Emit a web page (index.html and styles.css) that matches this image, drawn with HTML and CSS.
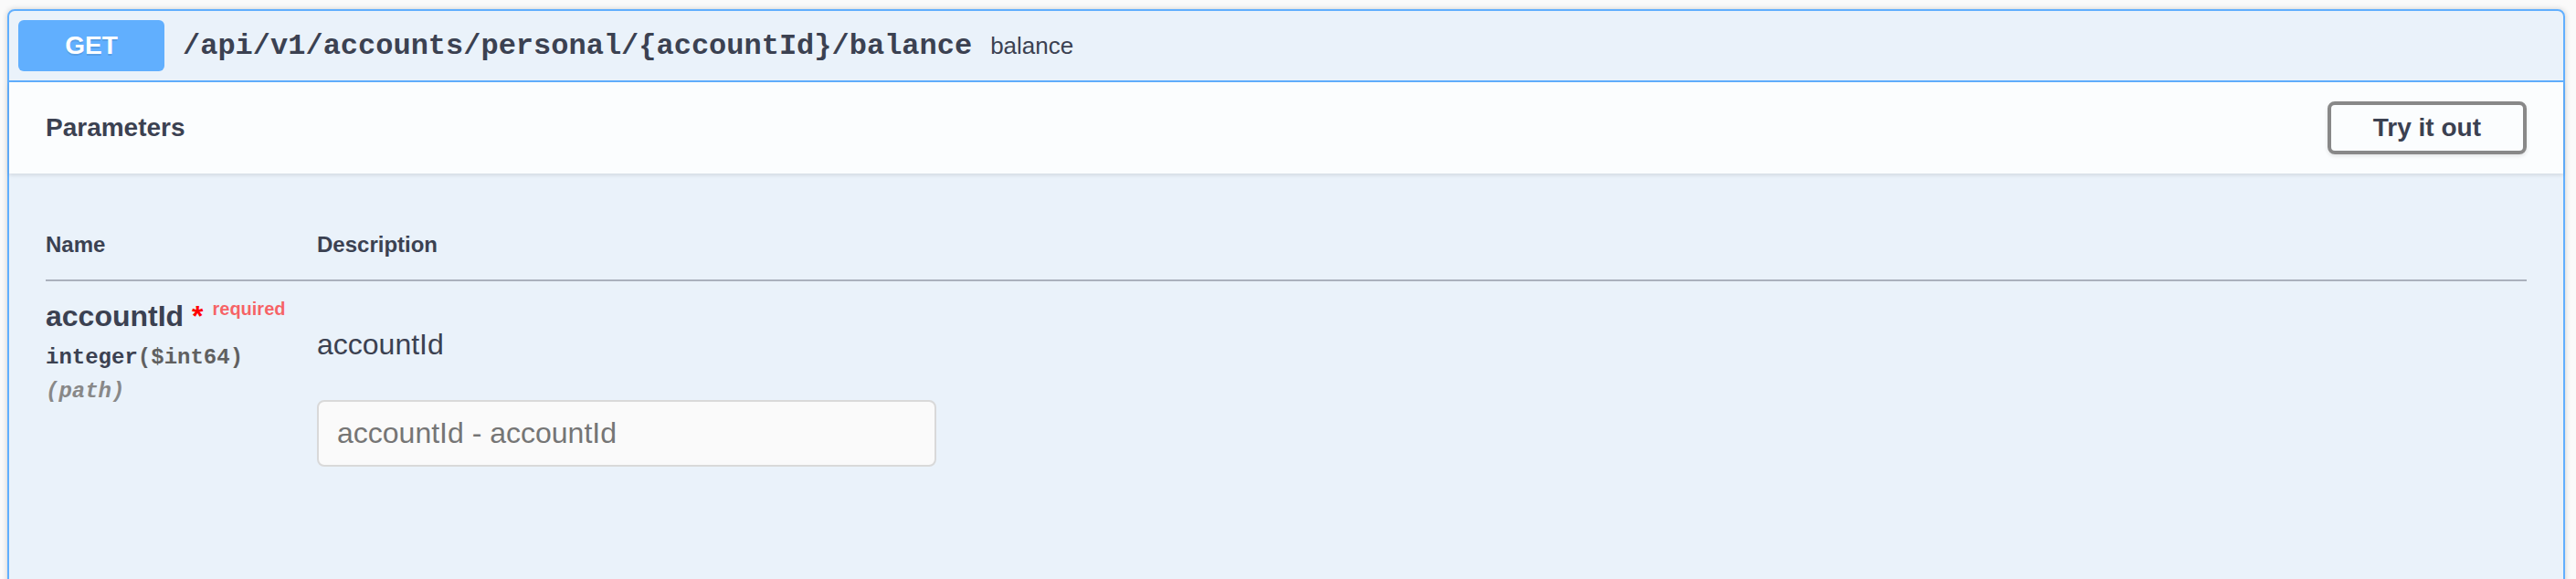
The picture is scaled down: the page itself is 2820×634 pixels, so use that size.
FILE: index.html
```html
<!DOCTYPE html>
<html lang="en">
<head>
<meta charset="utf-8">
<title>GET /api/v1/accounts/personal/{accountId}/balance</title>
<link rel="stylesheet" href="styles.css">
</head>
<body>
  <div class="opblock">
    <div class="opblock-summary">
      <span class="method">GET</span>
      <span class="path">/api/v1/accounts/personal/{accountId}/balance</span>
      <span class="summary-desc">balance</span>
    </div>
    <div class="opblock-body">
      <div class="section-header">
        <h4 class="section-title">Parameters</h4>
        <button class="try-out-btn" type="button">Try it out</button>
      </div>
      <div class="table-container">
        <table class="parameters">
          <thead>
            <tr>
              <th class="col-name">Name</th>
              <th class="col-desc">Description</th>
            </tr>
          </thead>
          <tbody>
            <tr>
              <td class="col-name">
                <div class="param-name">accountId<span class="star">&nbsp;*</span><span class="required">required</span></div>
                <div class="param-type">integer<span class="prop-format">($int64)</span></div>
                <div class="param-in">(path)</div>
              </td>
              <td class="col-desc">
                <p class="desc-text">accountId</p>
                <input class="param-input" type="text" placeholder="accountId - accountId">
              </td>
            </tr>
          </tbody>
        </table>
      </div>
    </div>
  </div>
</body>
</html>
```
FILE: styles.css
```css
html, body {
  margin: 0;
  background: #fafafa;
}
body {
  padding: 10px 12px 0 8px;
  font-family: "Liberation Sans", Arial, sans-serif;
  color: #3b4151;
}
.opblock {
  border: 2px solid #61affe;
  border-radius: 8px;
  background: rgba(97, 175, 254, 0.1);
  box-shadow: 0 0 6px rgba(0, 0, 0, 0.19);
}
.opblock-summary {
  display: flex;
  align-items: center;
  padding: 10px;
  border-bottom: 2px solid #61affe;
}
.method {
  display: inline-block;
  min-width: 160px;
  height: 56px;
  line-height: 56px;
  box-sizing: border-box;
  background: #61affe;
  color: #fff;
  border-radius: 6px;
  font-size: 28px;
  font-weight: 700;
  text-align: center;
  text-shadow: 0 2px 0 rgba(0, 0, 0, 0.1);
}
.path {
  font-family: "Liberation Mono", "Courier New", monospace;
  font-weight: 700;
  font-size: 32px;
  padding: 0 20px;
  color: #3b4151;
}
.summary-desc {
  font-size: 26px;
  color: #3b4151;
}
.opblock-body {
  min-height: 600px;
}
.section-header {
  display: flex;
  align-items: center;
  justify-content: space-between;
  min-height: 100px;
  box-sizing: border-box;
  padding: 16px 40px;
  background: rgba(255, 255, 255, 0.8);
  box-shadow: 0 2px 4px rgba(0, 0, 0, 0.1);
}
.section-title {
  margin: 0;
  font-size: 28px;
  font-weight: 700;
  color: #3b4151;
}
.try-out-btn {
  font-family: "Liberation Sans", Arial, sans-serif;
  font-size: 28px;
  font-weight: 700;
  line-height: 30px;
  color: #3b4151;
  background: transparent;
  border: 4px solid #888;
  border-radius: 8px;
  padding: 10px 46px;
  box-shadow: 0 2px 4px rgba(0, 0, 0, 0.1);
}
.table-container {
  padding: 40px;
}
.parameters {
  width: 100%;
  border-collapse: collapse;
}
.parameters th {
  font-size: 24px;
  line-height: 28px;
  font-weight: 700;
  text-align: left;
  padding: 24px 0;
  border-bottom: 2px solid rgba(59, 65, 81, 0.2);
  color: #3b4151;
}
.parameters th.col-name,
.parameters td.col-name {
  width: 297px;
}
.parameters td {
  vertical-align: top;
  padding: 20px 0 0 0;
}
.param-name {
  font-size: 32px;
  font-weight: 700;
  line-height: 36px;
  color: #3b4151;
}
.star {
  color: red;
}
.required {
  position: relative;
  top: -12px;
  padding: 10px;
  font-size: 20px;
  color: rgba(255, 0, 0, 0.6);
}
.param-type {
  font-family: "Liberation Mono", "Courier New", monospace;
  font-size: 24px;
  font-weight: 700;
  line-height: 27px;
  padding: 10px 0;
  color: #3b4151;
}
.prop-format {
  color: #606060;
}
.param-in {
  font-family: "Liberation Mono", "Courier New", monospace;
  font-size: 24px;
  font-weight: 700;
  font-style: italic;
  line-height: 27px;
  color: #888;
}
.desc-text {
  margin: 31px 0 43px;
  font-size: 32px;
  line-height: 36px;
  color: #3b4151;
}
.param-input {
  display: block;
  width: 678px;
  box-sizing: border-box;
  margin: 10px 0;
  padding: 16px 20px;
  font-family: "Liberation Sans", Arial, sans-serif;
  font-size: 32px;
  line-height: 37px;
  border: 2px solid #d9d9d9;
  border-radius: 8px;
  background: #fafafa;
  color: #3b4151;
}
.param-input::placeholder {
  color: #757575;
}
```
